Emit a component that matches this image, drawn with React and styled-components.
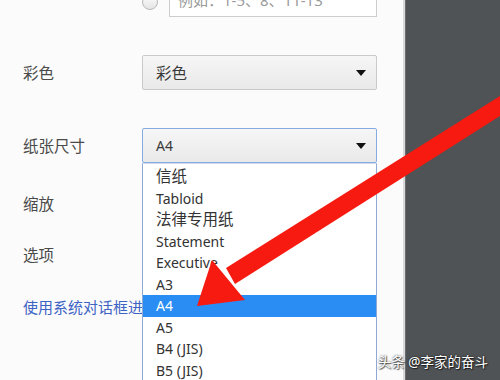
import React from 'react';
import styled, { createGlobalStyle } from 'styled-components';

const GlobalStyle = createGlobalStyle`
  html, body {
    margin: 0;
    padding: 0;
    width: 500px;
    height: 380px;
    overflow: hidden;
  }
  body {
    font-family: "Noto Sans", "Noto Sans CJK SC", sans-serif;
    -webkit-font-smoothing: antialiased;
  }
`;

const Screen = styled.div`
  position: relative;
  display: flex;
  width: 500px;
  height: 380px;
  overflow: hidden;
`;

const Settings = styled.div`
  width: 403px;
  flex: 0 0 403px;
  background: #fbfbfb;
  border-right: 2px solid #d9d9d9;
  display: flex;
  flex-direction: column;
`;

const Preview = styled.div`
  flex: 1;
  background: #505355;
  box-shadow: inset 1px 0 0 #6a6d6f;
`;

const Row = styled.div`
  position: relative;
  z-index: ${(p) => (p.$raised ? 3 : 1)};
  display: flex;
  align-items: center;
  height: 35px;
  flex: 0 0 35px;
  margin-top: ${(p) => p.$top}px;
`;

const Label = styled.div`
  width: 142px;
  flex: 0 0 142px;
  padding-left: 23px;
  box-sizing: border-box;
  font-size: 15.5px;
  color: #4a4a4a;
`;

const Radio = styled.span`
  display: block;
  width: 16px;
  height: 16px;
  flex: 0 0 16px;
  margin-left: 142px;
  margin-top: 5px;
  border-radius: 50%;
  border: 1px solid #b9b9b9;
  background: linear-gradient(#fdfdfd, #e4e4e4);
  box-sizing: border-box;
`;

const Input = styled.div`
  margin-left: 11px;
  width: 208px;
  height: 35px;
  box-sizing: border-box;
  border: 1px solid #cdcdcd;
  background: #fff;
  display: flex;
  align-items: center;
  padding-left: 8px;
  font-size: 15px;
  color: #9a9a9a;
`;

const SelectBox = styled.div`
  position: relative;
  width: 235px;
  height: 35px;
  box-sizing: border-box;
  border: 1px solid ${(p) => (p.$focused ? '#86abe3' : '#cacaca')};
  border-radius: 2px;
  background: linear-gradient(#f6f6f6, #e9e9e9);
  display: flex;
  align-items: center;
  justify-content: space-between;
  padding: 0 10px 0 13px;
  font-size: ${(p) => (p.$cjk ? 15.5 : 14)}px;
  color: #3a3a3a;
`;

const Caret = styled.span`
  width: 0;
  height: 0;
  border-left: 5px solid transparent;
  border-right: 5px solid transparent;
  border-top: 6px solid #111;
`;

const Link = styled.div`
  width: 142px;
  overflow: hidden;
  padding-left: 23px;
  box-sizing: border-box;
  font-size: 15px;
  color: #3d63c4;
  white-space: nowrap;
`;

const DropList = styled.div`
  position: absolute;
  left: -1px;
  top: 34px;
  width: 235px;
  box-sizing: border-box;
  border: 1px solid #8fa9d4;
  border-top-color: #cfd9ea;
  background: #fff;
  padding-top: 2px;
`;

const Option = styled.div`
  height: 21.5px;
  line-height: 21.5px;
  padding-left: 13px;
  font-size: ${(p) => (p.$cjk ? 15.5 : 14)}px;
  color: ${(p) => (p.$active ? '#fff' : '#333')};
  background: ${(p) => (p.$active ? '#2a8df4' : 'transparent')};
`;

const Overlay = styled.svg`
  position: absolute;
  left: 0;
  top: 0;
  z-index: 5;
  pointer-events: none;
`;

const Watermark = styled.div`
  position: absolute;
  right: 12px;
  bottom: 9px;
  z-index: 6;
  font-size: 13.5px;
  color: #fff;
  text-shadow: 0 0 2px rgba(0, 0, 0, 0.8), 1px 1px 1px rgba(0, 0, 0, 0.6);
`;

const paperSizes = ['信纸', 'Tabloid', '法律专用纸', 'Statement', 'Executive', 'A3', 'A4', 'A5', 'B4 (JIS)', 'B5 (JIS)', 'B6 (JIS)'];
const isCjk = (s) => /[\u4e00-\u9fff]/.test(s);

export default function App() {
  return (
    <>
      <GlobalStyle />
      <Screen>
        <Settings>
          <Row $top={-18}>
            <Radio />
            <Input>例如：1-5、8、11-13</Input>
          </Row>
          <Row $top={38}>
            <Label>彩色</Label>
            <SelectBox $cjk>
              彩色
              <Caret />
            </SelectBox>
          </Row>
          <Row $top={38} $raised>
            <Label>纸张尺寸</Label>
            <SelectBox $focused>
              A4
              <Caret />
              <DropList>
                {paperSizes.map((s) => (
                  <Option key={s} $cjk={isCjk(s)} $active={s === 'A4'}>{s}</Option>
                ))}
              </DropList>
            </SelectBox>
          </Row>
          <Row $top={23}>
            <Label>缩放</Label>
          </Row>
          <Row $top={16}>
            <Label>选项</Label>
          </Row>
          <Row $top={17}>
            <Link>使用系统对话框进行打印</Link>
          </Row>
        </Settings>
        <Preview />
        <Overlay width="500" height="380" viewBox="0 0 500 380">
          <path d="M500 96 L226 268 L235 284 L500 116 Z" fill="#f61a10" />
          <path d="M197 306 L212 260 L245 300 Z" fill="#f61a10" />
        </Overlay>
        <Watermark>头条 @李家的奋斗</Watermark>
      </Screen>
    </>
  );
}
